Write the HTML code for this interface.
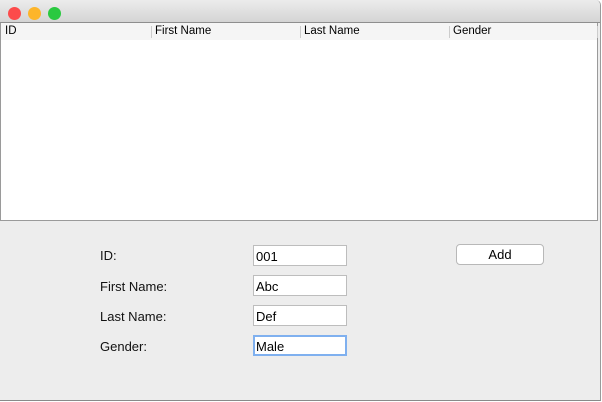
<!DOCTYPE html>
<html><head><style>
body{margin:0;width:602px;height:402px;background:#fff;font-family:"Liberation Sans",sans-serif;position:relative;overflow:hidden}
.win{position:absolute;left:0;top:0;width:601px;height:401px;border-right:1px solid #9a9a9a;border-bottom:1px solid #8a8a8a;border-radius:0 5px 0 0;background:#ededed;box-sizing:border-box;overflow:hidden}
.title{position:absolute;left:0;top:0;width:100%;height:22px;background:linear-gradient(#ececec,#d4d4d4);border-bottom:1px solid #8e8e8e}
.dot{position:absolute;top:7px;width:13px;height:13px;border-radius:50%}
.tbl{position:absolute;left:0;top:23px;width:598px;height:198px;background:#fff;border:1px solid #9a9a9a;border-top:none;box-sizing:border-box}
.hdr{position:absolute;left:0;top:0;width:100%;height:17px;background:#f5f5f5;font-size:11.5px;color:#000}
.hdr span{position:absolute;top:2px}
.sep{position:absolute;top:3px;width:1px;height:12px;background:#ccc}
.lbl{position:absolute;left:100px;font-size:13px;color:#111}
.tf{position:absolute;left:253px;width:94px;height:21px;background:#fff;border:1px solid #bdbdbd;box-sizing:border-box;font-size:13px;padding:3px 0 0 2px}
.btn{position:absolute;left:456px;top:244px;width:88px;height:21px;background:#fff;border:1px solid #b8b8b8;border-radius:4px;box-sizing:border-box;font-size:13px;text-align:center;line-height:19px}
</style></head><body>
<div class="win">
<div class="title">
<div class="dot" style="left:8px;background:#fc4b4b"></div>
<div class="dot" style="left:28px;background:#fdb52a"></div>
<div class="dot" style="left:48px;background:#2ac940"></div>
</div>
<div class="tbl"><div class="hdr">
<span style="left:4px">ID</span>
<div class="sep" style="left:150px"></div><span style="left:154px">First Name</span>
<div class="sep" style="left:299px"></div><span style="left:303px">Last Name</span>
<div class="sep" style="left:448px"></div><span style="left:452px">Gender</span>
<div class="sep" style="left:596px"></div>
</div></div>
<div class="lbl" style="top:248px">ID:</div>
<div class="lbl" style="top:279px">First Name:</div>
<div class="lbl" style="top:309px">Last Name:</div>
<div class="lbl" style="top:339px">Gender:</div>
<div class="tf" style="top:245px">001</div>
<div class="tf" style="top:275px">Abc</div>
<div class="tf" style="top:305px">Def</div>
<div class="tf" style="top:335px;border:2px solid #7fb0ef;padding:2px 0 0 1px">Male</div>
<div class="btn">Add</div>
</div>
</body></html>
